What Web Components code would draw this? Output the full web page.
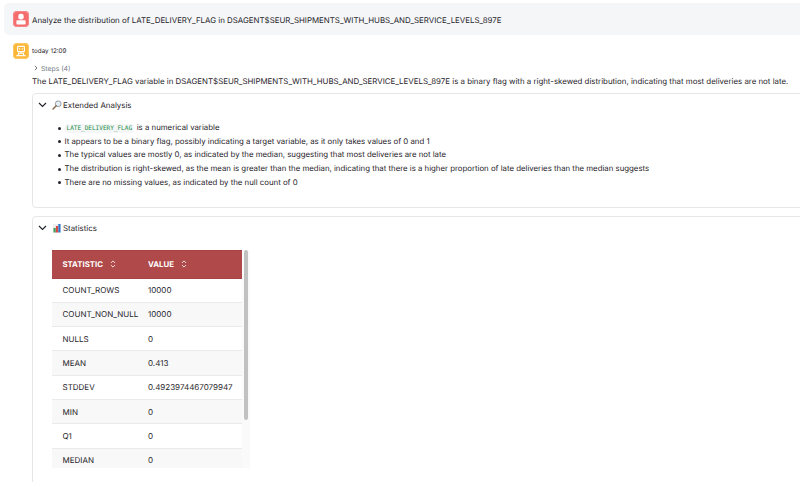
<!DOCTYPE html>
<html>
<head>
<meta charset="utf-8">
<style>
  html, body { margin: 0; height: 482px; overflow: hidden; background: #fff; }
  body { font-family: Inter, "Liberation Sans", sans-serif; font-size: 7.88px; color: #1f2329; text-rendering: geometricPrecision; }
</style>
</head>
<body>
<chat-page>
  <user-bar>Analyze the distribution of LATE_DELIVERY_FLAG in DSAGENT$SEUR_SHIPMENTS_WITH_HUBS_AND_SERVICE_LEVELS_897E</user-bar>
  <agent-head time="today 12:09"></agent-head>
  <steps-line>Steps (4)</steps-line>
  <answer-text>The LATE_DELIVERY_FLAG variable in DSAGENT$SEUR_SHIPMENTS_WITH_HUBS_AND_SERVICE_LEVELS_897E is a binary flag with a right-skewed distribution, indicating that most deliveries are not late.</answer-text>
  <fold-card heading="Extended Analysis" body-height="91">
    <svg slot="icon" width="10" height="10" viewBox="0 0 10 10">
      <circle cx="6.2" cy="3.8" r="2.9" fill="#e6eef5" stroke="#7d8894" stroke-width=".8"/>
      <path d="M4.2 5.8 1 9" stroke="#8a6a4a" stroke-width="1.5" stroke-linecap="round"/>
    </svg>
    <analysis-list></analysis-list>
  </fold-card>
  <fold-card heading="Statistics" body-height="252">
    <svg slot="icon" width="10" height="10" viewBox="0 0 10 10">
      <rect x="1" y="1" width="8" height="8.5" fill="#eef1f4"/>
      <rect x="1.5" y="5" width="2.2" height="4.5" fill="#3f9a58"/>
      <rect x="3.9" y="3" width="2.2" height="6.5" fill="#d9473f"/>
      <rect x="6.3" y="1" width="2.2" height="8.5" fill="#2f74c9"/>
    </svg>
    <stat-table></stat-table>
  </fold-card>
</chat-page>
<script>
const makeRoot = (el, html) => {
  el.attachShadow({ mode: "open" }).innerHTML = html;
};

class ChatPage extends HTMLElement {
  connectedCallback() {
    makeRoot(this, `<style>
      :host { display: flex; flex-direction: column; width: 860px; padding: 3px 0 0 4px; }
    </style><slot></slot>`);
  }
}

class UserBar extends HTMLElement {
  connectedCallback() {
    makeRoot(this, `<style>
      :host { display: flex; align-items: center; gap: 3px; height: 32px; padding-left: 9px;
        background: #f5f6f8; border-radius: 5px; }
      svg { display: block; }
      span { position: relative; top: .5px; }
    </style>
    <svg width="16" height="16" viewBox="0 0 16 16">
      <rect width="16" height="16" rx="4" fill="#f56c6c"/>
      <rect x=".6" y=".6" width="14.8" height="14.8" rx="3.5" fill="none" stroke="#f89a9a" stroke-width=".7"/>
      <rect x="5.3" y="2.8" width="5.4" height="5.6" rx="2.2" fill="#fff"/>
      <rect x="3.4" y="9.2" width="9.2" height="4.4" rx=".8" fill="#fff"/>
    </svg>
    <span><slot></slot></span>`);
  }
}

class AgentHead extends HTMLElement {
  connectedCallback() {
    makeRoot(this, `<style>
      :host { display: flex; align-items: center; gap: 3px; margin: 8px 0 0 9px; height: 16px;
        font-size: 6.3px; }
      svg { display: block; }
    </style>
    <svg width="16" height="16" viewBox="0 0 16 16">
      <rect width="16" height="16" rx="4" fill="#fbb635"/>
      <rect x=".6" y=".6" width="14.8" height="14.8" rx="3.5" fill="none" stroke="#fdd27e" stroke-width=".7"/>
      <g fill="none" stroke="#fff" stroke-width="1.1">
        <rect x="4.6" y="3.4" width="6.8" height="5.2" rx=".5"/>
        <path d="M3.4 12.6h9.2M8 8.6v1.6M5.4 12.6v-2.4h5.2v2.4"/>
      </g>
      <rect x="6" y="5.3" width="1.2" height="1.2" fill="#fff"/>
      <rect x="8.8" y="5.3" width="1.2" height="1.2" fill="#fff"/>
    </svg>
    <span>${this.getAttribute("time")}</span>`);
  }
}

class StepsLine extends HTMLElement {
  connectedCallback() {
    makeRoot(this, `<style>
      :host { display: flex; align-items: center; gap: 3px; margin: 4px 0 0 30px; height: 10px;
        font-size: 6.8px; color: #737a85; }
      svg { display: block; }
    </style>
    <svg width="4" height="6" viewBox="0 0 4 6"><path d="M.8.8 3 3 .8 5.2" fill="none" stroke="#555" stroke-width=".8"/></svg>
    <span><slot></slot></span>`);
  }
}

class AnswerText extends HTMLElement {
  connectedCallback() {
    makeRoot(this, `<style>
      :host { display: block; margin: 2px 0 0 28px; height: 13px; line-height: 13px; white-space: nowrap; }
    </style><slot></slot>`);
  }
}

class FoldCard extends HTMLElement {
  connectedCallback() {
    makeRoot(this, `<style>
      :host { display: block; margin: 0 0 8px 28px; border: 1px solid #e5e6e8; border-radius: 4px; }
      :host(:first-of-type) { margin-top: 5px; }
      .head { display: flex; align-items: center; gap: 5px; height: 22px; padding-left: 5px; }
      .head svg { display: block; }
      .label { display: flex; align-items: center; gap: 1px; }
      .body { height: ${this.getAttribute("body-height")}px; }
    </style>
    <div class="head">
      <svg width="9" height="6" viewBox="0 0 9 6"><path d="M1 1 4.5 4.5 8 1" fill="none" stroke="#22262c" stroke-width="1.2"/></svg>
      <span class="label"><slot name="icon"></slot><span>${this.getAttribute("heading")}</span></span>
    </div>
    <div class="body"><slot></slot></div>`);
  }
}

class AnalysisList extends HTMLElement {
  connectedCallback() {
    makeRoot(this, `<style>
      :host { display: block; padding-top: 5px; }
      ul { margin: 0; padding: 0 0 0 31.5px; list-style: none; font-size: 7.82px; }
      li { position: relative; height: 13.7px; line-height: 13.7px; white-space: nowrap; }
      li::before { content: ""; position: absolute; left: -6.5px; top: 5.5px; width: 3px; height: 3px;
        border-radius: 50%; background: #22262c; }
      code { font-family: "DejaVu Sans Mono", monospace; font-size: 6.05px; color: #1a8f45;
        background: #f5f6f7; padding: 1px 2px; border-radius: 2px; margin-right: .5px; }
    </style>
    <ul>
      <li><code>LATE_DELIVERY_FLAG</code> is a numerical variable</li>
      <li>It appears to be a binary flag, possibly indicating a target variable, as it only takes values of 0 and 1</li>
      <li>The typical values are mostly 0, as indicated by the median, suggesting that most deliveries are not late</li>
      <li>The distribution is right-skewed, as the mean is greater than the median, indicating that there is a higher proportion of late deliveries than the median suggests</li>
      <li>There are no missing values, as indicated by the null count of 0</li>
    </ul>`);
  }
}

class StatTable extends HTMLElement {
  connectedCallback() {
    const rows = [
      ["COUNT_ROWS", "10000"], ["COUNT_NON_NULL", "10000"], ["NULLS", "0"], ["MEAN", "0.413"],
      ["STDDEV", "0.4923974467079947"], ["MIN", "0"], ["Q1", "0"], ["MEDIAN", "0"],
    ];
    const sortIcon = `<svg width="6" height="8" viewBox="0 0 6 8"><path d="M.9 3 3 .9 5.1 3M.9 5 3 7.1 5.1 5" fill="none" stroke="#fff" stroke-width=".8"/></svg>`;
    makeRoot(this, `<style>
      :host { display: flex; margin: 11px 0 0 19px; width: 198px; height: 218px; overflow: hidden;
        font-size: 8px; }
      .table { width: 190px; flex: none; }
      .row { display: grid; grid-template-columns: 85.5px 1fr; align-items: center; height: 24.3px;
        padding-left: 10.5px; box-sizing: border-box; border-bottom: 1px solid #e9eaeb; white-space: nowrap; }
      .row:nth-child(odd) { background: #f8f8f8; }
      .row.head { height: 28.5px; background: #b04a4a; color: #fff; font-weight: 700; font-size: 7.8px; border: 1px solid #a84343; border-width: 1px 0; }
      .row.head span { display: flex; align-items: center; gap: 7px; }
      .bar { flex: none; box-sizing: border-box; width: 8px; padding: 0 2px; background: #fafafa; }
      .bar div { height: 170px; background: #c1c1c1; border-radius: 2px; }
    </style>
    <div class="table">
      <div class="row head"><span>STATISTIC ${sortIcon}</span><span>VALUE ${sortIcon}</span></div>
      ${rows.map(([k, v]) => `<div class="row"><div>${k}</div><div>${v}</div></div>`).join("")}
    </div>
    <div class="bar"><div></div></div>`);
  }
}

customElements.define("chat-page", ChatPage);
customElements.define("user-bar", UserBar);
customElements.define("agent-head", AgentHead);
customElements.define("steps-line", StepsLine);
customElements.define("answer-text", AnswerText);
customElements.define("fold-card", FoldCard);
customElements.define("analysis-list", AnalysisList);
customElements.define("stat-table", StatTable);
</script>
</body>
</html>
